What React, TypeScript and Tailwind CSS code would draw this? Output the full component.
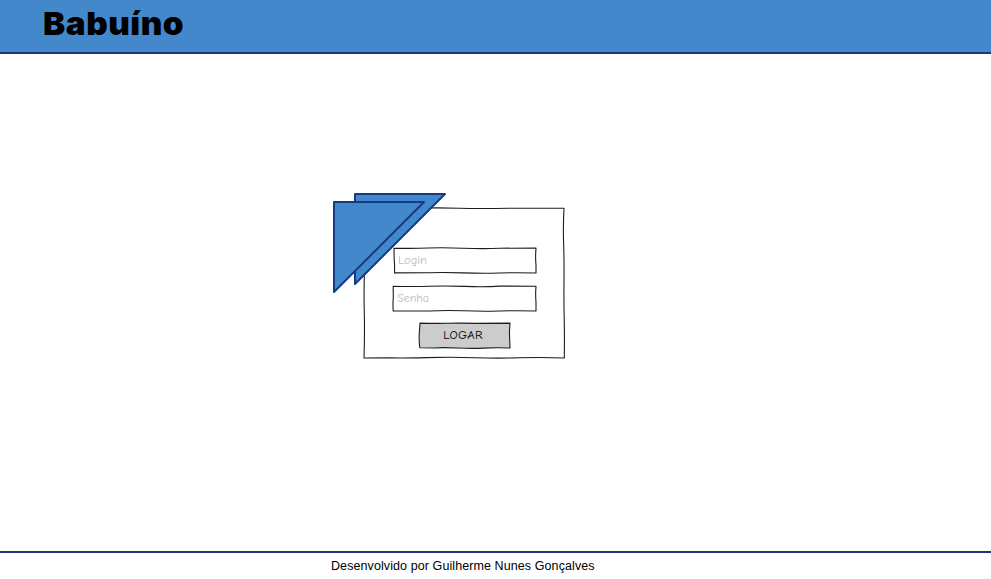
import type { ReactNode } from "react";

type SketchProps = { outline: string; fill?: string; className: string; children?: ReactNode };

// A box whose border is a slightly wobbly pen line.
function Sketch({ outline, fill = "white", className, children }: SketchProps) {
  return (
    <div className={`relative ${className}`}>
      <svg className="absolute inset-0 h-full w-full overflow-visible" aria-hidden="true">
        <path d={outline} fill={fill} stroke="#1c1c1c" strokeWidth="1.1" strokeLinejoin="round" />
      </svg>
      {children}
    </div>
  );
}

function CornerTriangles() {
  return (
    <svg
      className="absolute -top-[16px] -left-[32px] h-[104px] w-[118px]"
      viewBox="332 192 118 104"
      fill="#4488cc"
      stroke="#153b86"
      strokeWidth="2"
      aria-hidden="true"
    >
      <path d="M355 194H445L355 284Z" strokeLinejoin="round" />
      <path d="M334 202H424L334 292Z" strokeLinejoin="round" />
    </svg>
  );
}

export default function App() {
  return (
    <div className="flex h-[579px] w-[991px] flex-col overflow-hidden bg-white font-['Liberation_Sans',sans-serif]">
      <header className="h-[54px] shrink-0 border-b-2 border-[#16377f] bg-[#4488cc] pl-[43px]">
        <h1 className="w-fit origin-left scale-x-[1.04] pt-[4px] font-['Inter',sans-serif] text-[32px] leading-[39px] font-black tracking-[0.5px] whitespace-nowrap text-black">
          Babuíno
        </h1>
      </header>

      <main className="flex-1 pt-[154px] pl-[364px]">
        <Sketch
          className="h-[150px] w-[200px]"
          outline="M0 .2Q27 .8 50 .2T95 .2T145 .2L200 .2Q199 18 199.6 35T200 73T200.2 110T200.3 150Q178 149.2 155 149.8T110 149.7T62 149.6T25 149.8L0 150Q.8 125 .3 105T.4 65T.2 30Z"
        >
          <form className="relative h-full pt-[40px]" onSubmit={(e) => e.preventDefault()}>
            <Sketch
              className="ml-[30px] h-[25px] w-[142px]"
              outline="M0 .2Q20 .6 34 0T69 .2T106 .2L142 .1Q141.2 9 142 17L142 25Q120 24.4 105 25T69 24.9T35 24.8L.5 24.9Q.8 16 .2 12Z"
            >
              <input
                aria-label="Login"
                placeholder="Login"
                className="relative block h-[24px] w-full bg-transparent pl-[4px] font-['Comic_Neue','Comic_Sans_MS','Lato',sans-serif] text-[12.5px] outline-none placeholder:text-[#bdbdbd]"
              />
            </Sketch>
            <Sketch
              className="mt-[13px] ml-[29px] h-[25px] w-[143px]"
              outline="M.2 .2Q20 .7 36 .2T72 .4T107 .1L143 .2Q142.3 9 143 16L143 25Q122 24.4 106 25T71 24.8T36 25L.2 24.9Q-.3 17 .3 12Z"
            >
              <input
                type="text"
                aria-label="Senha"
                placeholder="Senha"
                className="relative block h-[24px] w-full bg-transparent pl-[4px] font-['Comic_Neue','Comic_Sans_MS','Lato',sans-serif] text-[12px] outline-none placeholder:text-[#bdbdbd]"
              />
            </Sketch>
            <Sketch
              className="mt-[12px] ml-[55px] h-[25px] w-[91px]"
              fill="#cccccc"
              outline="M1 .1Q14 .6 28 .3T58 .4L91 .1Q90.2 8 90.6 14L91 25Q75 24.5 65 25.1T38 25T16 25L.8 24.8Q-.3 16 .4 9Z"
            >
              <button className="relative block h-[26px] w-full pr-[3px] text-center font-['Comic_Neue','Comic_Sans_MS','Lato',sans-serif] text-[12.7px] tracking-[0.3px] text-black">
                LOGAR
              </button>
            </Sketch>
          </form>
          <CornerTriangles />
        </Sketch>
      </main>

      <footer className="h-[28px] shrink-0 border-t-2 border-[#16377f] pt-[5px] pl-[331px] text-[12.5px] leading-[16px] tracking-[0.09px] whitespace-nowrap text-black">
        Desenvolvido por Guilherme Nunes Gonçalves
      </footer>
    </div>
  );
}
